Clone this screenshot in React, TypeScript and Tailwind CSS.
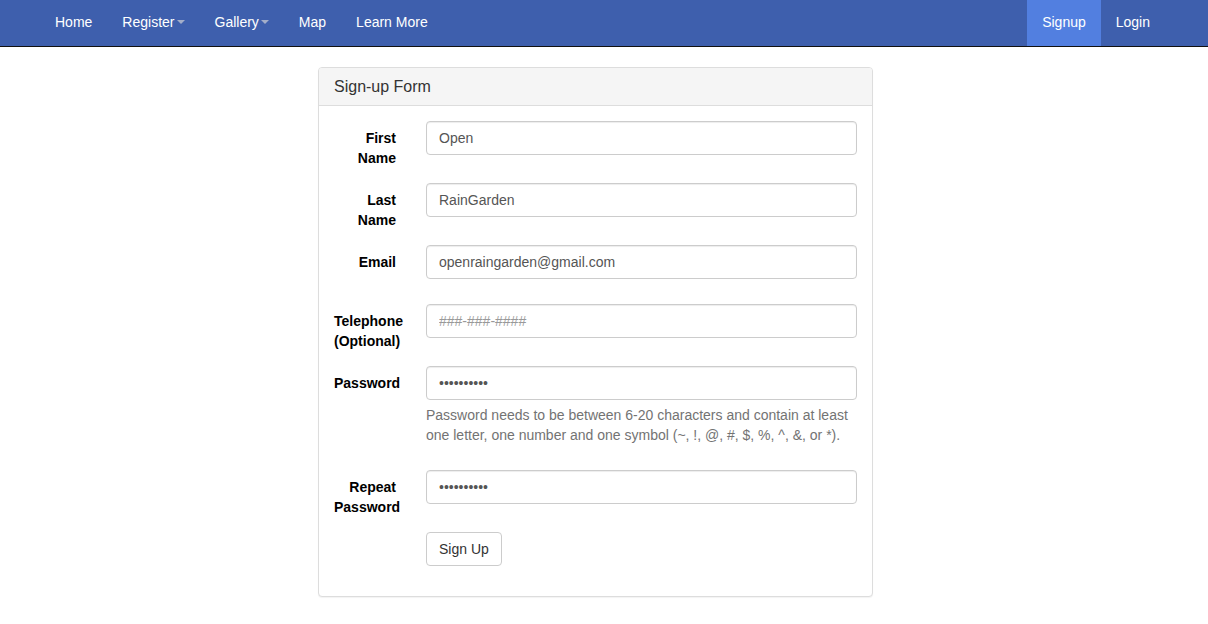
import React from "react";

const font = { fontFamily: '"Liberation Sans", Arial, Helvetica, sans-serif' };

function Caret() {
  return (
    <span className="ml-[2px] inline-block h-0 w-0 border-x-[4px] border-t-[4px] border-x-transparent border-t-[#a3aec9] align-middle" />
  );
}

function Label({ children }: { children: React.ReactNode }) {
  return (
    <div className="w-[92px] shrink-0 px-[15px]">
      <label className="block pt-[7px] text-right text-[14px] font-bold leading-[20px] text-black">
        {children}
      </label>
    </div>
  );
}

const inputCls =
  "block h-[34px] w-full rounded-[4px] border border-[#ccc] bg-white px-[12px] py-[6px] text-[14px] leading-[20px] text-[#555] shadow-[inset_0_1px_1px_rgba(0,0,0,0.075)] outline-none placeholder:text-[#999]";

export default function App() {
  return (
    <div style={font} className="min-h-[624px] bg-white text-[14px] text-[#333]">
      <nav className="flex h-[47px] items-stretch justify-between border-b border-[#111] bg-[#3e5fad] pl-[40px] pr-[43px] text-white">
        <div className="flex">
          <a className="flex items-center px-[15px] pb-[2px]">Home</a>
          <a className="flex items-center px-[15px] pb-[2px]">
            Register
            <Caret />
          </a>
          <a className="flex items-center px-[15px] pb-[2px]">
            Gallery
            <Caret />
          </a>
          <a className="flex items-center px-[15px] pb-[2px]">Map</a>
          <a className="flex items-center px-[15px] pb-[2px]">Learn More</a>
        </div>
        <div className="flex">
          <a className="flex items-center bg-[#527fe0] px-[15px] pb-[2px]">Signup</a>
          <a className="flex items-center px-[15px] pb-[2px]">Login</a>
        </div>
      </nav>

      <div className="flex pl-[318px] pt-[20px]">
        <div className="w-[555px] rounded-[4px] border border-[#ddd] bg-white shadow-[0_1px_1px_rgba(0,0,0,0.05)]">
          <div className="h-[38px] rounded-t-[3px] border-b border-[#ddd] bg-[#f5f5f5] px-[15px] pt-[9px] text-[16px] leading-[19px] text-[#333]">
            Sign-up Form
          </div>
          <div className="py-[15px]">
            <div className="mb-[15px] flex">
              <Label>First Name</Label>
              <div className="flex-1 px-[15px]">
                <input className={inputCls} defaultValue="Open" />
              </div>
            </div>
            <div className="mb-[15px] flex">
              <Label>Last Name</Label>
              <div className="flex-1 px-[15px]">
                <input className={inputCls} defaultValue="RainGarden" />
              </div>
            </div>
            <div className="mb-[25px] flex">
              <Label>Email</Label>
              <div className="flex-1 px-[15px]">
                <input className={inputCls} defaultValue="openraingarden@gmail.com" />
              </div>
            </div>
            <div className="mb-[15px] flex">
              <Label>Telephone (Optional)</Label>
              <div className="flex-1 px-[15px]">
                <input className={inputCls} placeholder="###-###-####" />
              </div>
            </div>
            <div className="mb-[15px] flex">
              <Label>Password</Label>
              <div className="flex-1 px-[15px]">
                <input className={inputCls} type="password" defaultValue="abcdefghij" />
                <p className="mb-[10px] mt-[5px] text-[14px] leading-[20px] text-[#737373]">
                  Password needs to be between 6-20 characters and contain at least one letter, one number and one symbol (~, !, @, #, $, %, ^, &amp;, or *).
                </p>
              </div>
            </div>
            <div className="mb-[15px] flex">
              <Label>Repeat Password</Label>
              <div className="flex-1 px-[15px]">
                <input className={inputCls} type="password" defaultValue="abcdefghij" />
              </div>
            </div>
            <div className="mb-[15px] flex">
              <div className="w-[92px] shrink-0" />
              <div className="flex-1 px-[15px]">
                <button className="h-[34px] rounded-[4px] border border-[#ccc] bg-white px-[12px] text-[14px] leading-[20px] text-[#333]">
                  Sign Up
                </button>
              </div>
            </div>
          </div>
        </div>
      </div>
    </div>
  );
}
